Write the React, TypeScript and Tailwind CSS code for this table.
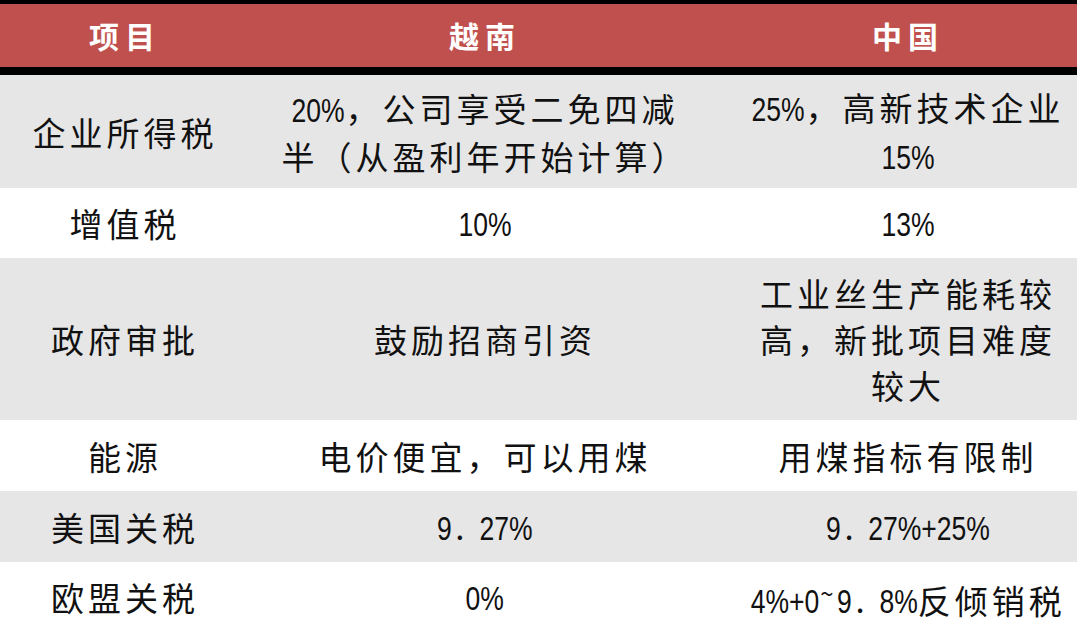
const FONT = '"Noto Sans CJK SC", sans-serif';

type Row = {
  label: string;
  vn: React.ReactNode;
  cn: React.ReactNode;
  h: string;
  bg: string;
};

// digits in the reference are a narrow face; squeeze Liberation Sans
function Num({ t, m }: { t: string; m: string }) {
  return (
    <span
      className={`inline-block scale-x-[0.78] tracking-normal text-[34px] ${m}`}
      style={{ fontFamily: '"Liberation Sans", sans-serif' }}
    >
      {t}
    </span>
  );
}

const Dot = () => <span className="ml-[3px] mr-[10px]">.</span>;

const rows: Row[] = [
  {
    label: "企业所得税",
    vn: (
      <>
        <Num t="20%" m="-mx-[7px]" />
        ，公司享受二免四减
        <br />
        半（从盈利年开始计算）
      </>
    ),
    cn: (
      <>
        <Num t="25%" m="-mx-[7px]" />
        ，高新技术企业
        <br />
        <Num t="15%" m="-mx-[7px]" />
      </>
    ),
    h: "h-[113px]",
    bg: "bg-[#e6e6e6]",
  },
  {
    label: "增值税",
    vn: <Num t="10%" m="-mx-[7px]" />,
    cn: <Num t="13%" m="-mx-[7px]" />,
    h: "h-[70px]",
    bg: "bg-white",
  },
  {
    label: "政府审批",
    vn: "鼓励招商引资",
    cn: (
      <>
        工业丝生产能耗较
        <br />
        高，新批项目难度
        <br />
        较大
      </>
    ),
    h: "h-[162px]",
    bg: "bg-[#e6e6e6]",
  },
  {
    label: "能源",
    vn: "电价便宜，可以用煤",
    cn: "用煤指标有限制",
    h: "h-[71px]",
    bg: "bg-white",
  },
  {
    label: "美国关税",
    vn: (
      <>
        <Num t="9" m="-mx-[2px]" />
        <Dot />
        <Num t="27%" m="-mx-[7px]" />
      </>
    ),
    cn: (
      <>
        <Num t="9" m="-mx-[2px]" />
        <Dot />
        <Num t="27%+25%" m="-mx-[17px]" />
      </>
    ),
    h: "h-[71px]",
    bg: "bg-[#e6e6e6]",
  },
  {
    label: "欧盟关税",
    vn: <Num t="0%" m="-mx-[5px]" />,
    cn: (
      <>
        <Num t="4%+0" m="-mx-[9px]" />
        <span className="align-[0.45em] text-[24px]">~</span>
        <Num t="9" m="-mx-[2px]" />
        <Dot />
        <Num t="8%" m="-mx-[5px]" />
        反倾销税
      </>
    ),
    h: "h-[70px]",
    bg: "bg-white",
  },
];

export default function App() {
  return (
    <div className="w-[1077px] h-[624px] overflow-hidden bg-white" style={{ fontFamily: FONT }}>
      <div className="w-[1096px]">
        <div className="h-[4px] bg-black" />
        <div className="grid grid-cols-[250px_470px_376px] h-[63px] bg-[#c0504d] text-white font-bold text-[30px] tracking-[6px] items-center text-center">
          <div>项目</div>
          <div>越南</div>
          <div>中国</div>
        </div>
        <div className="h-[8px] bg-black" />
        {rows.map((r) => (
          <div
            key={r.label}
            className={`grid grid-cols-[250px_470px_376px] ${r.h} ${r.bg} text-[#111] text-[33px] leading-[46px] tracking-[4px] items-center text-center`}
          >
            <div>{r.label}</div>
            <div className="whitespace-nowrap">{r.vn}</div>
            <div className="whitespace-nowrap">{r.cn}</div>
          </div>
        ))}
      </div>
    </div>
  );
}
